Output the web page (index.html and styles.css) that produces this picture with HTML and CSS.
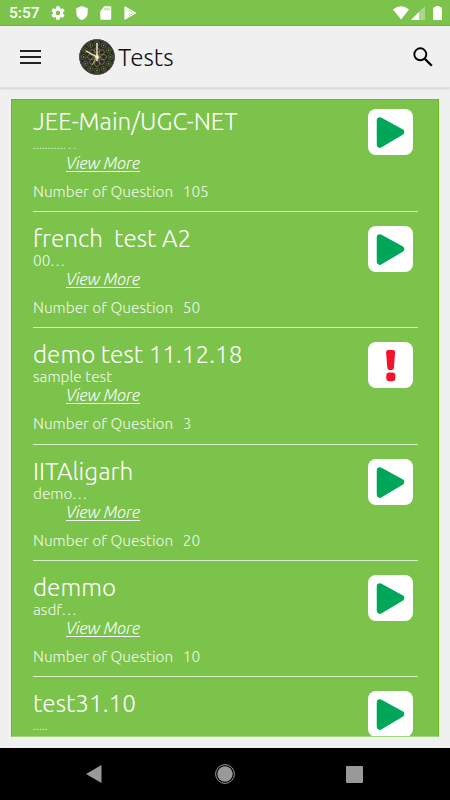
FILE: index.html
```html
<!DOCTYPE html>
<html lang="en">
<head>
    <meta charset="UTF-8" />
    <meta name="viewport" content="width=device-width, initial-scale=1.0" />
    <title>Tests</title>
    <link rel="stylesheet" href="styles.css">
</head>
<body>
    <svg class="sprite" aria-hidden="true">
        <symbol id="play" viewBox="0 0 45 46">
            <path d="M12 11.5L33 23L12 35.5Z" fill="#00a65a" stroke="#00a65a" stroke-width="6.5" stroke-linejoin="round" />
        </symbol>
        <symbol id="alert" viewBox="0 0 45 46">
            <path d="M20.3 8h4.6q2.3 0 2.2 2.3l-1.2 15.5q-.3 2.2-2.2 2.2h-2.2q-1.9 0-2.2-2.2L18.1 10.3Q18 8 20.3 8z" fill="#f5132b" />
            <rect x="18.3" y="30.5" width="9" height="8.8" rx="3" fill="#f5132b" />
        </symbol>
    </svg>

    <div class="status-bar">
        <span class="time">5:57</span>
        <svg class="gear" width="16" height="16" viewBox="0 0 24 24" fill="#fff"><path d="M19.43 12.98c.04-.32.07-.64.07-.98s-.03-.66-.07-.98l2.11-1.65c.19-.15.24-.42.12-.64l-2-3.46c-.12-.22-.39-.3-.61-.22l-2.49 1c-.52-.4-1.08-.73-1.69-.98l-.38-2.65C14.46 2.18 14.25 2 14 2h-4c-.25 0-.46.18-.49.42l-.38 2.65c-.61.25-1.17.59-1.69.98l-2.49-1c-.23-.09-.49 0-.61.22l-2 3.46c-.13.22-.07.49.12.64l2.11 1.65c-.04.32-.07.65-.07.98s.03.66.07.98l-2.11 1.65c-.19.15-.24.42-.12.64l2 3.46c.12.22.39.3.61.22l2.49-1c.52.4 1.08.73 1.69.98l.38 2.65c.03.24.24.42.49.42h4c.25 0 .46-.18.49-.42l.38-2.65c.61-.25 1.17-.59 1.69-.98l2.49 1c.23.09.49 0 .61-.22l2-3.46c.12-.22.07-.49-.12-.64l-2.11-1.65zM12 15.5a3.5 3.5 0 1 1 0-7 3.5 3.5 0 0 1 0 7z" /></svg>
        <svg width="12" height="14" viewBox="0 0 12 14" fill="#fff"><path d="M6 0l5.7 2.3v4.4c0 3.4-2.4 6.2-5.7 7.3C2.7 12.9.3 10.1.3 6.7V2.3z" /></svg>
        <svg width="12" height="14" viewBox="0 0 12 14" fill="#fff"><path d="M4.3.3H10q1.2 0 1.2 1.2v11q0 1.2-1.2 1.2H1.5Q.3 13.7.3 12.5V5.2z" /><path d="M5 2v2.4M7 2v2.4M9 2v2.4" stroke="#7cc34c" stroke-width=".8" /></svg>
        <svg width="13" height="14" viewBox="0 0 13 14" fill="none" stroke="#fff"><path d="M1 1l10.5 6L1 13z" stroke-width="1.2" stroke-linejoin="round" /><path d="M1 1.5v11L6 7zM8.7 5.2v3.6l3.3-1.8z" fill="#fff" stroke="none" /><path d="M1 1l8 8M1 13l8-8" stroke-width="1.1" /></svg>
        <div class="signals">
            <svg width="16" height="14" viewBox="0 0 16 14" fill="#fff"><path d="M0 3.5Q8-3 16 3.5L8 13.5z" /></svg>
            <svg width="14" height="14" viewBox="0 0 14 14" fill="#fff"><path d="M0 14L14 0v14z" opacity=".35" /><path d="M0 14L8 6v8z" /></svg>
            <svg class="battery" width="9" height="14" viewBox="0 0 9 14" fill="#fff"><path d="M2.5 1.3V0h4v1.3H8q1 0 1 1V13q0 1-1 1H1q-1 0-1-1V2.3q0-1 1-1z" /></svg>
        </div>
    </div>

    <header class="toolbar">
        <svg width="21" height="14" viewBox="0 0 21 14"><path d="M0 1h21M0 7h21M0 13h21" stroke="#222" stroke-width="1.8" /></svg>
        <svg class="clock" width="36" height="36" viewBox="-18 -18 36 36">
            <defs>
                <g id="mark"><circle cy="-13.4" r="2.5" fill="#20251c" stroke="#77703c" stroke-width=".7" /><path d="M-.9-13.4H.9M0-14.5v2.2" stroke="#45a338" stroke-width="1" /></g>
                <ellipse id="petal" cy="-5.5" rx="2.7" ry="4" fill="none" stroke="#8a7e45" stroke-width=".8" />
            </defs>
            <circle r="17.8" fill="#292a29" />
            <circle r="17.2" fill="none" stroke="#4c4e4c" stroke-width="1" />
            <use href="#mark" /><use href="#mark" transform="rotate(30)" /><use href="#mark" transform="rotate(60)" />
            <use href="#mark" transform="rotate(90)" /><use href="#mark" transform="rotate(120)" /><use href="#mark" transform="rotate(150)" />
            <use href="#mark" transform="rotate(180)" /><use href="#mark" transform="rotate(210)" /><use href="#mark" transform="rotate(240)" />
            <use href="#mark" transform="rotate(270)" /><use href="#mark" transform="rotate(300)" /><use href="#mark" transform="rotate(330)" />
            <use href="#petal" /><use href="#petal" transform="rotate(45)" /><use href="#petal" transform="rotate(90)" /><use href="#petal" transform="rotate(135)" />
            <use href="#petal" transform="rotate(180)" /><use href="#petal" transform="rotate(225)" /><use href="#petal" transform="rotate(270)" /><use href="#petal" transform="rotate(315)" />
            <path d="M0 4V-14M2 1L-11-6" stroke="#f3efd2" stroke-width="1.4" />
            <path d="M1-2L-5 8" stroke="#c5bd91" stroke-width=".9" />
            <circle r="1.8" fill="#f3efd2" />
        </svg>
        <h1>Tests</h1>
        <svg class="search" width="20" height="20" viewBox="0 0 20 20" fill="none" stroke="#000"><circle cx="7.3" cy="7.3" r="6" stroke-width="1.9" /><path d="M11.7 11.7L18.8 18.8" stroke-width="2.3" /></svg>
    </header>

    <main class="test-list">
        <section class="test">
            <div class="info">
                <h2>JEE-Main/UGC-NET</h2>
                <p class="dots">..........<span>...</span></p>
                <a class="more">View More</a>
                <p class="count"><span>Number of Question</span><span>105</span></p>
            </div>
            <svg class="action"><use href="#play" /></svg>
        </section>
        <section class="test">
            <div class="info">
                <h2>french&nbsp; test A2</h2>
                <p>00<span class="ellipsis">...</span></p>
                <a class="more">View More</a>
                <p class="count"><span>Number of Question</span><span>50</span></p>
            </div>
            <svg class="action"><use href="#play" /></svg>
        </section>
        <section class="test">
            <div class="info">
                <h2>demo test 11.12.18</h2>
                <p>sample test</p>
                <a class="more">View More</a>
                <p class="count"><span>Number of Question</span><span>3</span></p>
            </div>
            <svg class="action"><use href="#alert" /></svg>
        </section>
        <section class="test">
            <div class="info">
                <h2>IITAligarh</h2>
                <p>demo<span class="ellipsis">...</span></p>
                <a class="more">View More</a>
                <p class="count"><span>Number of Question</span><span>20</span></p>
            </div>
            <svg class="action"><use href="#play" /></svg>
        </section>
        <section class="test">
            <div class="info">
                <h2>demmo</h2>
                <p>asdf<span class="ellipsis">...</span></p>
                <a class="more">View More</a>
                <p class="count"><span>Number of Question</span><span>10</span></p>
            </div>
            <svg class="action"><use href="#play" /></svg>
        </section>
        <section class="test">
            <div class="info">
                <h2>test31.10</h2>
                <p class="dots">.....</p>
            </div>
            <svg class="action"><use href="#play" /></svg>
        </section>
    </main>

    <nav class="nav-bar">
        <svg width="16" height="18" viewBox="0 0 16 18"><path d="M0 9L15.5 0v18z" fill="#999" /></svg>
        <svg class="home" width="20" height="20" viewBox="0 0 20 20"><circle cx="10" cy="10" r="9.4" fill="none" stroke="#999" /><circle cx="10" cy="10" r="7.7" fill="#999" /></svg>
        <svg width="17" height="17" viewBox="0 0 17 17"><rect width="17" height="17" rx="1" fill="#999" /></svg>
    </nav>
</body>
</html>
```
FILE: styles.css
```css
:root {
    --green: #7cc34c;
    --page-bg: #f0f0f0;
}

* {
    margin: 0;
    padding: 0;
    box-sizing: border-box;
}

body {
    display: flex;
    flex-direction: column;
    height: 800px;
    overflow: hidden;
    background: var(--page-bg);
    font-family: Ubuntu, "Open Sans", sans-serif;
    font-weight: 300;
}

svg {
    display: block;
    flex-shrink: 0;
}

.sprite {
    position: absolute;
    width: 0;
    height: 0;
}

.status-bar {
    display: flex;
    align-items: center;
    gap: 12px;
    height: 26px;
    padding: 0 8px 0 9px;
    background: var(--green);
    border-bottom: 1px solid #6bb92a;
    color: #fff;
}

.time {
    width: 29px;
    padding-top: 1px;
    font: 500 15.5px Roboto, sans-serif;
}

.gear {
    margin-right: -2px;
}

.signals {
    display: flex;
    gap: 2px;
    margin-left: auto;
}

.battery {
    margin-left: 6px;
}

.toolbar {
    display: flex;
    align-items: center;
    height: 62px;
    padding: 0 17px 0 20px;
    border-bottom: 1px solid #ddd;
    box-shadow: 0 1px 2px rgba(0, 0, 0, 0.12);
}

.clock {
    margin-left: 38px;
}

.toolbar h1 {
    margin-left: 3px;
    font-size: 24.3px;
    font-weight: 300;
    color: #111;
}

.search {
    margin-left: auto;
}

.test-list {
    height: 638px;
    margin: 11px;
    overflow: hidden;
    background: var(--green);
    border: 1px solid #69bc16;
    border-bottom-color: #a2d57f;
    color: #fff;
}

.test {
    display: flex;
    justify-content: space-between;
    height: 116.3px;
    margin: 0 20px 0 21px;
    padding: 14px 5px 0 0;
    border-bottom: 1px solid rgba(255, 255, 255, 0.7);
}

.test h2 {
    height: 27px;
    font-size: 24.3px;
    font-weight: 300;
    line-height: 24px;
    white-space: nowrap;
}

.test:first-child {
    height: 112px;
    padding-top: 9px;
}

.test:first-child h2 {
    height: 28px;
}

.info p {
    height: 18px;
    font-size: 15.4px;
    line-height: 16px;
    opacity: 0.9;
}

.info .dots {
    font-size: 12px;
    letter-spacing: 0.1px;
}

.dots span {
    letter-spacing: 2.4px;
}

.ellipsis {
    letter-spacing: 1.6px;
}

.more {
    display: block;
    height: 18px;
    margin-left: 33px;
    font-size: 16.2px;
    font-style: italic;
    line-height: 17px;
    text-decoration: underline;
    text-underline-offset: 2px;
}

.info .count {
    display: flex;
    gap: 9.5px;
    margin-top: 11px;
}

.action {
    width: 45px;
    height: 46px;
    background: #fff;
    border-radius: 8px;
}

.nav-bar {
    display: flex;
    justify-content: space-between;
    align-items: center;
    height: 52px;
    padding: 0 87px 0 86px;
    background: #000;
}

.home {
    margin-left: 1px;
}
```
